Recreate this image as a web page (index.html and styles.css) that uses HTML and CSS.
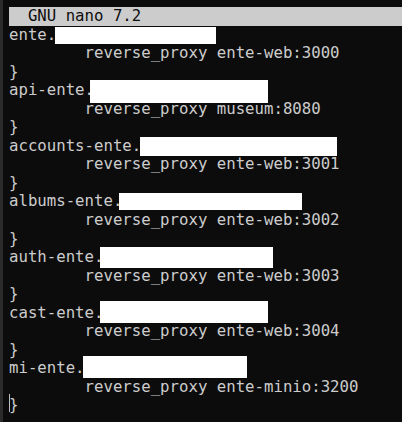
FILE: index.html
```html
<!DOCTYPE html>
<html>
<head>
<meta charset="utf-8">
<link rel="stylesheet" href="styles.css">
</head>
<body>
<div class="term">
<div class="line head">  GNU nano 7.2</div>
<div class="line">ente.<span class="redact" style="margin-left:-1px;width:161px;height:17.3px;margin-top:1.5px"></span></div>
<div class="line">        reverse_proxy ente-web:3000</div>
<div class="line">}</div>
<div class="line">api-ente.<span class="redact" style="margin-left:-4px;width:178px;height:22.7px;margin-top:-1.2px"></span></div>
<div class="line">        reverse_proxy museum:8080</div>
<div class="line">}</div>
<div class="line">accounts-ente.<span class="redact" style="margin-left:-1px;width:197px;height:18.7px;margin-top:0px"></span></div>
<div class="line">        reverse_proxy ente-web:3001</div>
<div class="line">}</div>
<div class="line">albums-ente.<span class="redact" style="margin-left:-3px;width:183px;height:17.3px;margin-top:0.2px"></span></div>
<div class="line">        reverse_proxy ente-web:3002</div>
<div class="line">}</div>
<div class="line">auth-ente.<span class="redact" style="margin-left:-3.6px;width:173px;height:21px;margin-top:-1.5px"></span></div>
<div class="line">        reverse_proxy ente-web:3003</div>
<div class="line">}</div>
<div class="line">cast-ente.<span class="redact" style="margin-left:-3.6px;width:168px;height:22.6px;margin-top:-3.1px"></span></div>
<div class="line">        reverse_proxy ente-web:3004</div>
<div class="line">}</div>
<div class="line">mi-ente.<span class="redact" style="margin-left:-2px;width:164px;height:22px;margin-top:-3.75px"></span></div>
<div class="line">        reverse_proxy ente-minio:3200</div>
<div class="line"><span class="cursor">}</span></div>
</div>
</body>
</html>
```
FILE: styles.css
```css
html, body {
  margin: 0;
  padding: 0;
  background: #0c0c0c;
}
body {
  width: 402px;
  height: 422px;
  overflow: hidden;
}
.term {
  box-sizing: border-box;
  height: 422px;
  border-left: 3px solid #2b2b2b;
  padding: 7px 0 0 6px;
  background: #0c0c0c;
  color: #cccccc;
  font-family: "DejaVu Sans Mono", monospace;
  font-size: 15.7px;
  line-height: 18.55px;
}
.line {
  height: 18.55px;
  white-space: pre;
}
.head {
  background: #cccccc;
  color: #0c0c0c;
}
.redact {
  display: inline-block;
  vertical-align: top;
  background: #ffffff;
}
.cursor {
  position: relative;
}
.cursor::before {
  content: "";
  position: absolute;
  left: 0;
  top: -1px;
  width: 1px;
  height: 18px;
  background: #bdbdbd;
}
```
